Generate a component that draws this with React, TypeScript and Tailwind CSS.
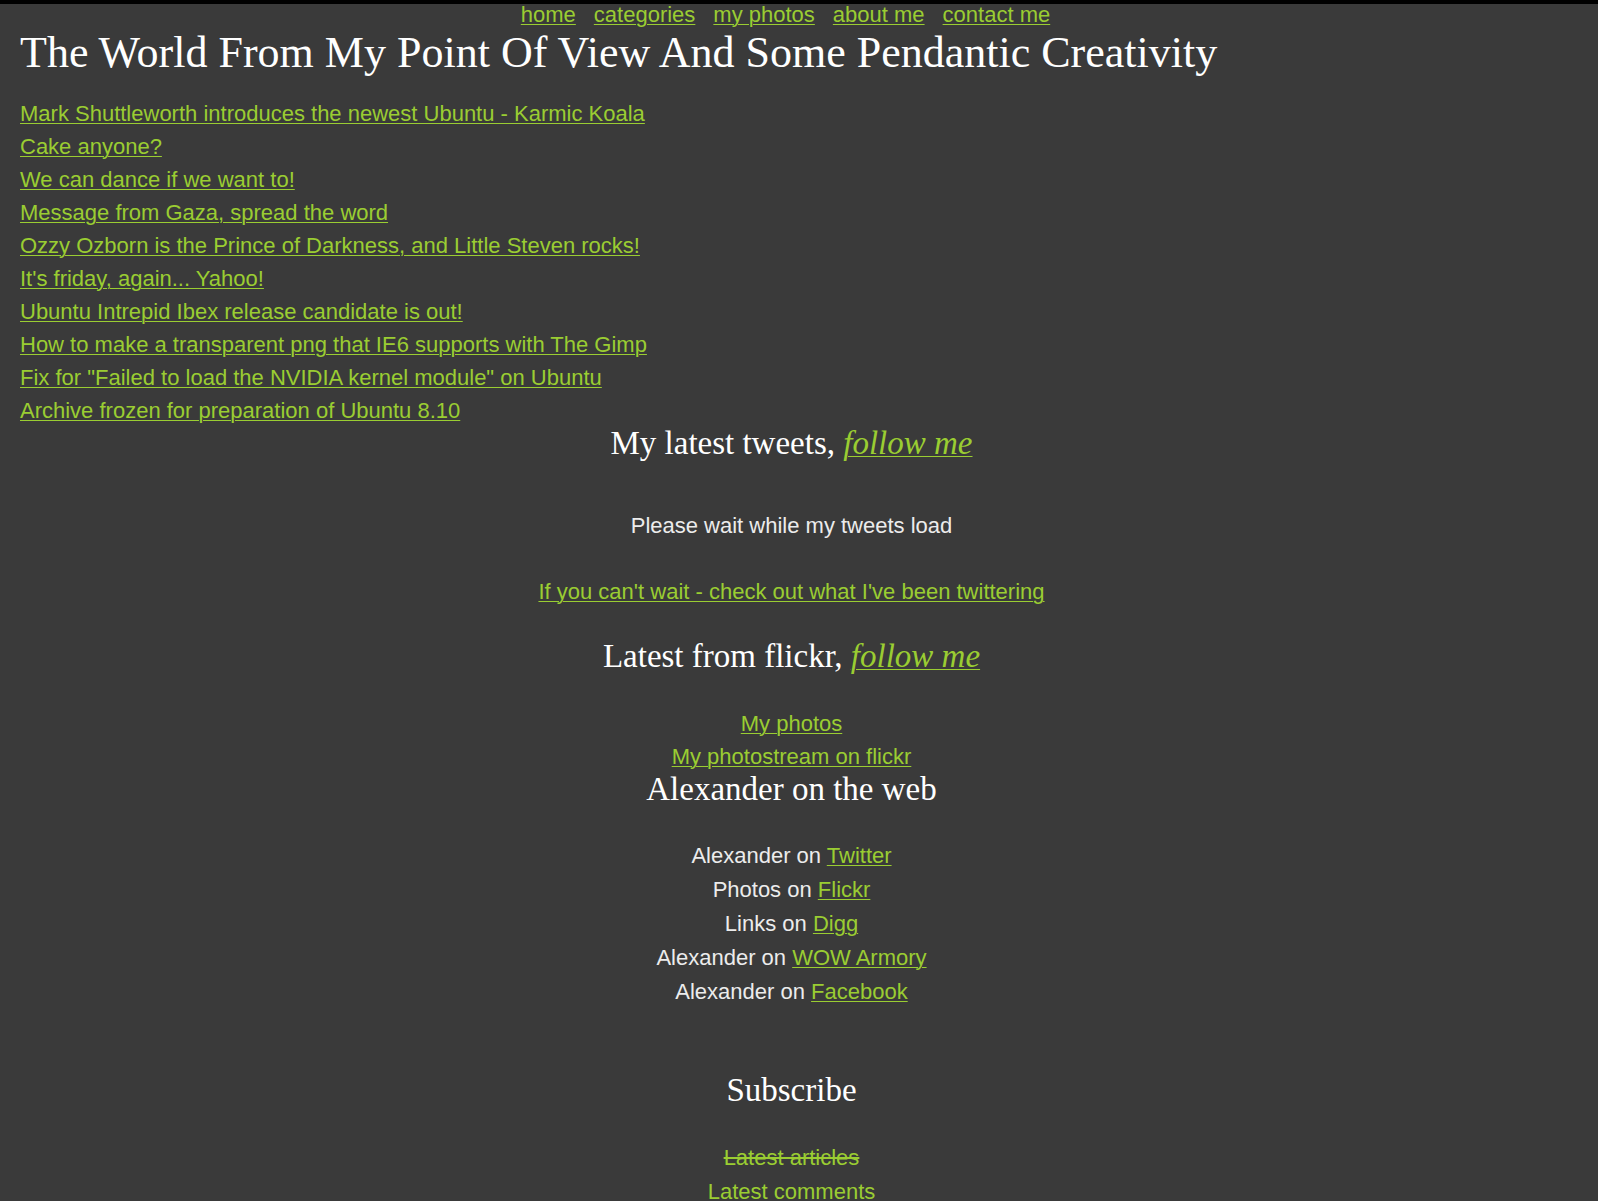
import React from "react";

const posts = [
  "Mark Shuttleworth introduces the newest Ubuntu - Karmic Koala",
  "Cake anyone?",
  "We can dance if we want to!",
  "Message from Gaza, spread the word",
  "Ozzy Ozborn is the Prince of Darkness, and Little Steven rocks!",
  "It's friday, again... Yahoo!",
  "Ubuntu Intrepid Ibex release candidate is out!",
  "How to make a transparent png that IE6 supports with The Gimp",
  'Fix for "Failed to load the NVIDIA kernel module" on Ubuntu',
  "Archive frozen for preparation of Ubuntu 8.10",
];

const web = [
  ["Alexander on ", "Twitter"],
  ["Photos on ", "Flickr"],
  ["Links on ", "Digg"],
  ["Alexander on ", "WOW Armory"],
  ["Alexander on ", "Facebook"],
];

const link = "text-[#9acd32] underline decoration-1 underline-offset-[2px]";
const serif = "font-['Liberation_Serif',serif]";

export default function App() {
  return (
    <div className="min-h-[1201px] w-full bg-[#3a3a3a] border-t-4 border-black font-['Liberation_Sans',Arial,sans-serif] text-[22px] text-[#ececec]">
      <div className="w-[1583px]">
        <nav className="flex justify-center gap-[18px] leading-[22px] pr-[12px]">
          {["home", "categories", "my photos", "about me", "contact me"].map((n) => (
            <a key={n} href="#" className={link}>
              {n}
            </a>
          ))}
        </nav>
        <h1 className={`${serif} text-[44px] leading-[50px] text-white pl-[20px] mt-[2px]`}>
          The World From My Point Of View And Some Pendantic Creativity
        </h1>
        <ul className="mt-[19px] pl-[20px]">
          {posts.map((p) => (
            <li key={p} className="leading-[33px]">
              <a href="#" className={link}>
                {p}
              </a>
            </li>
          ))}
        </ul>
        <div className="text-center">
          <h2 className={`${serif} text-[33px] leading-[33px] text-white`}>
            My latest tweets,{" "}
            <a href="#" className={`${link} italic`}>
              follow me
            </a>
          </h2>
          <p className="mt-[49px] leading-[33px]">Please wait while my tweets load</p>
          <p className="mt-[33px] leading-[33px]">
            <a href="#" className={link}>
              If you can't wait - check out what I've been twittering
            </a>
          </p>
          <h2 className={`${serif} text-[33px] leading-[33px] text-white mt-[32px]`}>
            Latest from flickr,{" "}
            <a href="#" className={`${link} italic`}>
              follow me
            </a>
          </h2>
          <div className="mt-[34px] leading-[33px]">
            <div>
              <a href="#" className={link}>
                My photos
              </a>
            </div>
            <div>
              <a href="#" className={link}>
                My photostream on flickr
              </a>
            </div>
          </div>
          <h2 className={`${serif} text-[33px] leading-[33px] text-white`}>Alexander on the web</h2>
          <ul className="mt-[33px]">
            {web.map(([a, b]) => (
              <li key={b} className="leading-[34px]">
                {a}
                <a href="#" className={link}>
                  {b}
                </a>
              </li>
            ))}
          </ul>
          <h2 className={`${serif} text-[33px] leading-[33px] text-white mt-[65px]`}>Subscribe</h2>
          <div className="mt-[34px]">
            <div className="leading-[34px]">
              <a href="#" className="text-[#9acd32] line-through">
                Latest articles
              </a>
            </div>
            <div className="leading-[33px]">
              <a href="#" className={link}>
                Latest comments
              </a>
            </div>
          </div>
        </div>
      </div>
    </div>
  );
}
